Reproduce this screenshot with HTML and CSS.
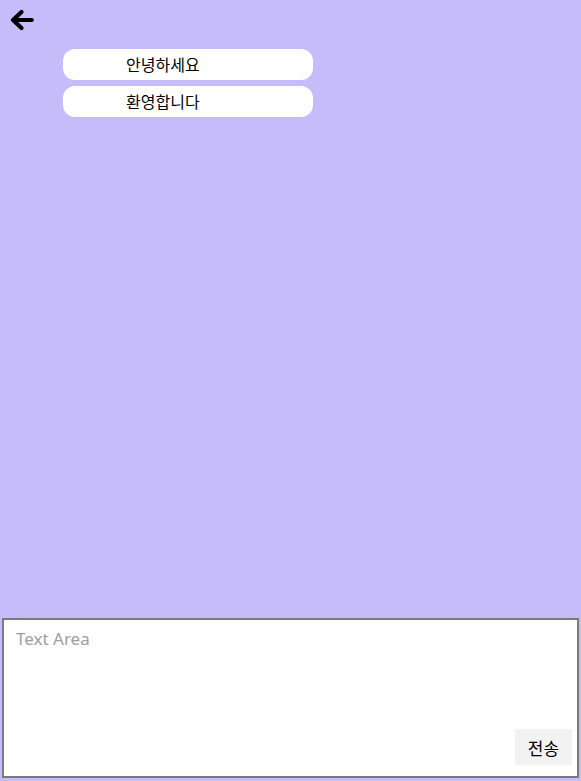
FILE: index.html
```html
<!DOCTYPE html>
<html lang="ko">
<head>
<meta charset="utf-8">
<title>Chat</title>
<link rel="stylesheet" href="styles.css">
</head>
<body>
<div class="page">
  <header class="top">
    <button class="back" aria-label="back">
      <svg width="24" height="22" viewBox="0 0 24 22"><path d="M21.8 11H5M11.5 3L3 11l8.5 8" fill="none" stroke="#000" stroke-width="4.2" stroke-linecap="round" stroke-linejoin="round"/></svg>
    </button>
  </header>
  <main class="messages">
    <div class="bubble">안녕하세요</div>
    <div class="bubble">환영합니다</div>
  </main>
  <footer class="composer">
    <div class="box">
      <textarea class="input" placeholder="Text Area"></textarea>
      <button class="send">전송</button>
    </div>
  </footer>
</div>
</body>
</html>
```
FILE: styles.css
```css
html, body {
  margin: 0;
  padding: 0;
  height: 100%;
}
body {
  background: #c6bcfa;
  font-family: "Noto Sans", "Noto Sans CJK KR", sans-serif;
}
.page {
  height: 781px;
  display: flex;
  flex-direction: column;
}
.top {
  height: 49px;
  padding: 9px 0 0 10px;
  box-sizing: border-box;
}
.back {
  border: 0;
  background: none;
  padding: 0;
  margin: 0;
  display: block;
  width: 24px;
  height: 22px;
}
.back svg { display: block; }
.messages {
  flex: 1;
  display: flex;
  flex-direction: column;
  gap: 6px;
  padding-left: 63px;
}
.bubble {
  width: 250px;
  height: 31px;
  box-sizing: border-box;
  background: #fff;
  border-radius: 12px;
  padding-left: 63px;
  font-family: "Noto Sans CJK KR", sans-serif;
  font-size: 16px;
  line-height: 31px;
  color: #000;
}
.composer {
  padding: 0 2px 3px 2px;
}
.box {
  height: 160px;
  box-sizing: border-box;
  border: 2px solid #7a7a7a;
  background: #fff;
  display: flex;
  flex-direction: column;
  align-items: flex-end;
  padding: 0 5px 11px 0;
}
.input {
  flex: 1;
  align-self: stretch;
  border: 0;
  outline: none;
  resize: none;
  padding: 7px 0 0 12px;
  font-family: "Noto Sans", "Noto Sans CJK KR", sans-serif;
  font-size: 17px;
  color: #000;
  background: transparent;
}
.input::placeholder {
  color: #a39d9d;
}
.send {
  width: 57px;
  height: 36px;
  border: 0;
  background: #f2f2f2;
  font-family: "Noto Sans CJK KR", sans-serif;
  font-size: 17px;
  color: #000;
  padding: 0;
}
```
